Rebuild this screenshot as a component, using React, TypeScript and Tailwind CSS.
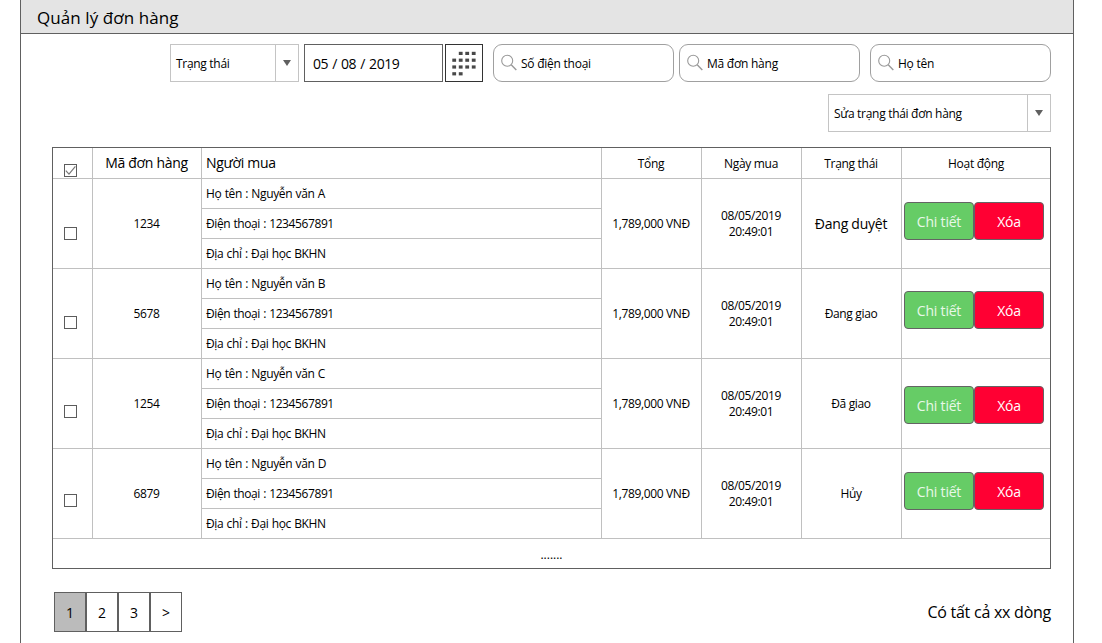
import React from "react";

const orders = [
  { id: "1234", name: "Nguyễn văn A", status: "Đang duyệt", large: true, check: "pt-[48px]", actions: "pt-[23px]" },
  { id: "5678", name: "Nguyễn văn B", status: "Đang giao", large: false, check: "pt-[47px]", actions: "pt-[22px]" },
  { id: "1254", name: "Nguyễn văn C", status: "Đã giao", large: false, check: "pt-[46px]", actions: "pt-[27px]" },
  { id: "6879", name: "Nguyễn văn D", status: "Hủy", large: false, check: "pt-[45px]", actions: "pt-[23px]" },
];

const columns =
  "grid grid-cols-[40px_109px_400px_100px_100px_100px_148px] border-b border-[#c0c0c0]";
const cell = "flex items-center justify-center border-r border-[#c0c0c0] pr-px";

function Checkbox({ checked = false }: { checked?: boolean }) {
  return (
    <span className="block h-[13px] w-[13px] border border-[#5c5c5c] bg-white">
      {checked && (
        <svg viewBox="0 0 11 11" className="block h-[11px] w-[11px]" fill="none" stroke="#777" strokeWidth="1.2">
          <path d="M0.8 5.6 4 9.2 10.4 1.4" />
        </svg>
      )}
    </span>
  );
}

function Select({ label, className }: { label: string; className: string }) {
  return (
    <div className={`flex h-[38px] border border-[#c4c4c4] ${className}`}>
      <div className="flex flex-1 items-center pt-[2px] pl-[5px] tracking-[-0.3px]">{label}</div>
      <div className="flex w-[23px] items-center justify-center border-l border-[#c4c4c4]">
        <svg width="8" height="6" viewBox="0 0 8 6" className="mb-px">
          <path d="M0 0H8L4 6Z" fill="#606060" />
        </svg>
      </div>
    </div>
  );
}

function Search({ label, className }: { label: string; className: string }) {
  return (
    <div className={`flex h-[38px] w-[181px] items-center rounded-[9px] border border-[#a0a0a0] pl-[7px] ${className}`}>
      <svg width="16" height="17" viewBox="0 0 16 17" fill="none" stroke="#999" strokeWidth="1.1" className="mb-px shrink-0">
        <circle cx="6.2" cy="6.7" r="5.5" />
        <path d="M10.2 10.8 15.3 16" strokeWidth="1.4" />
      </svg>
      <span className="ml-[4px] pt-[2px] tracking-[-0.25px]">{label}</span>
    </div>
  );
}

function CalendarButton() {
  const rows = [
    [0, 1, 1, 1],
    [1, 1, 1, 1],
    [1, 1, 1, 1],
    [1, 1, 0, 0],
  ];
  return (
    <div className="ml-[2px] flex h-[38px] w-[38px] items-center justify-center border border-[#333] pt-px">
      <svg width="24" height="25" viewBox="0 0 24 25" fill="#484848">
        {rows.map((row, y) =>
          row.map((on, x) =>
            on ? <rect key={`${x}-${y}`} x={x * 6.5 + 0.3} y={y * 6.8 + 0.8} width="3.8" height="3.2" /> : null,
          ),
        )}
      </svg>
    </div>
  );
}

function ActionButton({ label, color }: { label: string; color: string }) {
  return (
    <button className={`flex h-[38px] w-[70px] items-center justify-center rounded-[4px] border border-[#646464] pt-[2px] text-[14px] tracking-[-0.2px] ${color}`}>
      {label}
    </button>
  );
}

export default function App() {
  return (
    <div className="h-[643px] w-[1102px] overflow-hidden bg-white font-['Open_Sans','Noto_Sans',sans-serif] text-[12px] leading-[16px] text-black">
      <div className="ml-[20px] h-full w-[1054px] border-x border-[#606060]">
        <header className="flex h-[34px] items-center border-b border-[#606060] bg-[#e4e4e4] pt-[2px] pl-[16px] text-[17px] tracking-[0.08px]">
          Quản lý đơn hàng
        </header>

        <div className="flex pt-[10px] pl-[149px]">
          <Select label="Trạng thái" className="w-[129px]" />
          <div className="ml-[5px] flex h-[38px] w-[139px] items-center border border-[#606060] pt-[2px] pl-[8px] text-[14px] tracking-[-0.4px] [word-spacing:0.8px]">
            05 / 08 / 2019
          </div>
          <CalendarButton />
          <Search label="Số điện thoại" className="ml-[10px]" />
          <Search label="Mã đơn hàng" className="ml-[5px]" />
          <Search label="Họ tên" className="ml-[10px]" />
        </div>

        <div className="flex justify-end pt-[12px] pr-[22px]">
          <Select label="Sửa trạng thái đơn hàng" className="w-[223px]" />
        </div>

        <div className="mt-[15px] ml-[31px] w-[999px] border border-[#606060]">
          <div className={`${columns} h-[31px] tracking-[-0.3px]`}>
            <div className="flex border-r border-[#c0c0c0] pt-[16px] pl-[11px]">
              <Checkbox checked />
            </div>
            <div className={`${cell} text-[14px]`}>Mã đơn hàng</div>
            <div className="flex items-center border-r border-[#c0c0c0] pl-[4px] text-[14px]">Người mua</div>
            <div className={`${cell} pt-px`}>Tổng</div>
            <div className={`${cell} pt-px`}>Ngày mua</div>
            <div className={`${cell} pt-px`}>Trạng thái</div>
            <div className="flex items-center justify-center pt-px">Hoạt động</div>
          </div>

          {orders.map((o) => (
            <div key={o.id} className={`${columns} h-[90px] tracking-[-0.35px]`}>
              <div className={`border-r border-[#c0c0c0] pl-[11px] ${o.check}`}>
                <Checkbox />
              </div>
              <div className={cell}>{o.id}</div>
              <div className="grid grid-rows-[30px_30px_29px] border-r border-[#c0c0c0] [word-spacing:0.5px]">
                <div className="flex items-center border-b border-[#c0c0c0] pl-[4px]">Họ tên : {o.name}</div>
                <div className="flex items-center border-b border-[#c0c0c0] pl-[4px] tracking-[-0.4px]">Điện thoại : 1234567891</div>
                <div className="flex items-center pl-[4px]">Địa chỉ : Đại học BKHN</div>
              </div>
              <div className={cell}>1,789,000 VNĐ</div>
              <div className={`${cell} text-center`}>
                <span>
                  08/05/2019
                  <br />
                  20:49:01
                </span>
              </div>
              <div className={`${cell} ${o.large ? "pt-px text-[14px] tracking-[-0.25px]" : ""}`}>{o.status}</div>
              <div className={`flex items-start pl-[2px] ${o.actions}`}>
                <ActionButton label="Chi tiết" color="bg-[#66cc66] text-[#e8f8e8]" />
                <ActionButton label="Xóa" color="bg-[#ff0033] text-white" />
              </div>
            </div>
          ))}

          <div className="flex h-[29px] items-center justify-center pt-[2px]">.......</div>
        </div>

        <footer className="flex justify-between pt-[23px] pr-[22px] pl-[33px]">
          <nav className="flex text-[14px]">
            {["1", "2", "3", ">"].map((p) => (
              <button
                key={p}
                className={`flex h-[40px] w-[32px] items-center justify-center border border-[#606060] pt-[2px] ${p === "1" ? "bg-[#bbbbbb]" : "bg-white"}`}
              >
                {p}
              </button>
            ))}
          </nav>
          <div className="flex h-[40px] items-center text-[16px] tracking-[-0.25px]">Có tất cả xx dòng</div>
        </footer>
      </div>
    </div>
  );
}
